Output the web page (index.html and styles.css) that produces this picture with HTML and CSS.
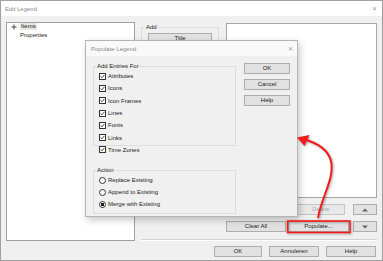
FILE: index.html
```html
<!DOCTYPE html>
<html lang="en">
<head>
    <meta charset="UTF-8">
    <meta name="viewport" content="width=device-width, initial-scale=1.0">
    <title>Edit Legend</title>
    <link rel="stylesheet" href="styles.css">
</head>
<body>
    <div class="window">
        <div class="titlebar">
            <span class="title">Edit Legend</span>
            <span class="close">&#x2715;</span>
        </div>
        <div class="content">
            <div class="main">
                <div class="tree">
                    <div class="tree-row">
                        <svg class="expander" width="6" height="6" viewBox="0 0 6 6"><path d="M3 0.5V5.5M0.5 3H5.5" stroke="#444" stroke-width="1"/></svg>
                        <span class="selected">Items</span>
                    </div>
                    <div class="tree-row child">Properties</div>
                </div>
                <div class="right">
                    <div class="top-row">
                        <div class="group add-group">
                            <span class="group-label">Add</span>
                            <button class="btn title-btn">Title</button>
                        </div>
                        <div class="list"></div>
                    </div>
                    <div class="btn-row">
                        <button class="btn delete-btn" disabled>Delete</button>
                        <button class="btn arrow-btn"><svg width="6" height="4" viewBox="0 0 6 4"><path d="M0 3.5L3 0.5L6 3.5Z" fill="#666"/></svg></button>
                    </div>
                    <div class="btn-row">
                        <button class="btn clear-btn">Clear All</button>
                        <button class="btn populate-btn">Populate...</button>
                        <button class="btn arrow-btn"><svg width="6" height="4" viewBox="0 0 6 4"><path d="M0 0.5L3 3.5L6 0.5Z" fill="#666"/></svg></button>
                    </div>
                    <div class="separator"></div>
                </div>
            </div>
            <div class="footer">
                <button class="btn footer-btn">OK</button>
                <button class="btn footer-btn">Annuleren</button>
                <button class="btn footer-btn">Help</button>
            </div>
        </div>

        <div class="dialog">
            <div class="titlebar dialog-titlebar">
                <span class="title">Populate Legend</span>
                <span class="close">&#x2715;</span>
            </div>
            <div class="dialog-body">
                <div class="dialog-groups">
                    <div class="group entries-group">
                        <span class="group-label">Add Entries For</span>
                        <label class="option"><span class="checkbox checked"></span>Attributes</label>
                        <label class="option"><span class="checkbox checked"></span>Icons</label>
                        <label class="option"><span class="checkbox checked"></span>Icon Frames</label>
                        <label class="option"><span class="checkbox checked"></span>Lines</label>
                        <label class="option"><span class="checkbox checked"></span>Fonts</label>
                        <label class="option"><span class="checkbox checked"></span>Links</label>
                        <label class="option"><span class="checkbox checked"></span>Time Zones</label>
                    </div>
                    <div class="group action-group">
                        <span class="group-label">Action</span>
                        <label class="option radio-option"><span class="radio"></span>Replace Existing</label>
                        <label class="option radio-option"><span class="radio"></span>Append to Existing</label>
                        <label class="option radio-option"><span class="radio selected-radio"></span>Merge with Existing</label>
                    </div>
                </div>
                <div class="dialog-buttons">
                    <button class="btn">OK</button>
                    <button class="btn">Cancel</button>
                    <button class="btn">Help</button>
                </div>
            </div>
        </div>

        <!-- annotation drawn over the screenshot -->
        <svg class="annotation" width="383" height="261" viewBox="0 0 383 261">
            <rect x="287.5" y="221" width="62.5" height="11.5" fill="none" stroke="#f41a1a" stroke-width="1.6"/>
            <path d="M318 218 C321 198, 335 178, 331 161 C328 149, 318 143, 303 139" fill="none" stroke="#f41a1a" stroke-width="2"/>
            <path d="M297 137.5 L309.5 135 L304.5 146 Z" fill="#f41a1a"/>
        </svg>
    </div>
</body>
</html>
```

FILE: styles.css
```css
* {
    box-sizing: border-box;
}
body {
    margin: 0;
    font-family: "Liberation Sans", Arial, sans-serif;
    font-size: 6px;
    color: #222;
}
.window {
    position: relative;
    width: 383px;
    height: 261px;
    border: 1px solid #a0a0a0;
    background-color: #f0f0f0;
    overflow: hidden;
}
.titlebar {
    height: 15px;
    background-color: #fff;
    display: flex;
    align-items: center;
    justify-content: space-between;
    padding: 0 5px 0 4px;
}
.title {
    color: #8a8a8a;
    font-size: 6px;
}
.close {
    color: #999;
    font-size: 6px;
}
.content {
    padding: 6px 5px 0 5px;
}
.main {
    display: flex;
    align-items: flex-start;
}
.tree {
    width: 129px;
    height: 219px;
    background-color: #fff;
    border: 1px solid #a0a0a0;
    padding: 0 4px;
    display: flex;
    flex-direction: column;
    gap: 2px;
}
.tree-row {
    line-height: 7px;
    display: flex;
    align-items: center;
    gap: 3px;
}
.tree-row.child {
    padding-left: 9px;
}
.selected {
    background-color: #e6e6e6;
    padding: 0 1px;
}
.right {
    margin-left: 6px;
    width: 236px;
}
.top-row {
    display: flex;
    align-items: flex-start;
}
.group {
    border: 1px solid #dcdcdc;
    padding: 0 5px;
}
.group-label {
    display: block;
    width: max-content;
    line-height: 8px;
    margin: -5px 0 0 -3px;
    padding: 0 1px;
    background-color: #f0f0f0;
}
.add-group {
    width: 78px;
    height: 170px;
    margin-top: 5px;
    padding-left: 6px;
}
.add-group .group-label {
    margin-left: -3px;
}
.title-btn {
    margin-top: 2px;
    width: 64px;
}
.list {
    width: 151px;
    height: 175px;
    margin: 1px 0 0 7px;
    background-color: #fff;
    border: 1px solid #a5a5a5;
}
.btn {
    height: 11px;
    padding: 0;
    font-family: inherit;
    font-size: 6px;
    line-height: 9px;
    color: #222;
    background-color: #e1e1e1;
    border: 1px solid #adadad;
    display: flex;
    align-items: center;
    justify-content: center;
}
.btn-row {
    display: flex;
    justify-content: flex-end;
    margin-top: 6px;
}
.btn-row:first-of-type {
    margin-top: 7px;
}
.delete-btn {
    width: 48px;
    margin-right: 8px;
    color: #a8a8a8;
    background-color: #e8e8e8;
    border-color: #c6c6c6;
}
.arrow-btn {
    width: 24px;
}
.clear-btn {
    width: 60px;
    margin-right: 2px;
}
.populate-btn {
    width: 61px;
    margin-right: 4px;
}
.separator {
    margin-top: 7px;
    border-top: 1px solid #d2d2d2;
    border-bottom: 1px solid #fff;
}
.footer {
    display: flex;
    justify-content: flex-end;
    gap: 7px;
    margin-top: 5px;
    padding-right: 1px;
}
.footer-btn {
    width: 48px;
}
.footer-btn + .footer-btn {
    width: 50px;
}

/* populate dialog, on top of the main window */
.dialog {
    position: absolute;
    left: 84px;
    top: 39px;
    width: 213px;
    height: 177px;
    background-color: #f0f0f0;
    border: 1px solid #b4b4b4;
    box-shadow: 2px 3px 7px rgba(0, 0, 0, 0.22);
}
.dialog-titlebar {
    background-color: #f9f9f9;
    height: 15px;
    padding: 0 4px 0 5px;
}
.dialog-body {
    display: flex;
    gap: 8px;
    padding: 7px 7px;
}
.dialog-groups {
    width: 143px;
}
.entries-group {
    height: 80px;
    margin-top: 3px;
}
.action-group {
    height: 44px;
    margin-top: 24px;
}
.option {
    display: flex;
    align-items: center;
    gap: 2px;
    height: 12.3px;
}
.radio-option {
    height: 12px;
}
.checkbox {
    width: 7px;
    height: 7px;
    border: 1px solid #333;
    background-color: #fff;
}
.checkbox.checked {
    background: #fff url("data:image/svg+xml;utf8,<svg xmlns='http://www.w3.org/2000/svg' width='5' height='5' viewBox='0 0 5 5'><path d='M0.6 2.5L1.9 3.8L4.4 0.9' fill='none' stroke='%23333' stroke-width='0.9'/></svg>") center / 5px 5px no-repeat;
}
.radio {
    width: 7px;
    height: 7px;
    border: 1px solid #333;
    border-radius: 50%;
    background-color: #fff;
}
.selected-radio {
    background: radial-gradient(circle, #222 0, #222 1.6px, #fff 2px);
}
.dialog-buttons {
    width: 46px;
    display: flex;
    flex-direction: column;
    gap: 5px;
}
.dialog-buttons .btn {
    width: 46px;
}
.annotation {
    position: absolute;
    left: -1px;
    top: -1px;
    filter: drop-shadow(1px 1px 1px rgba(0, 0, 0, 0.35));
    pointer-events: none;
}
```
